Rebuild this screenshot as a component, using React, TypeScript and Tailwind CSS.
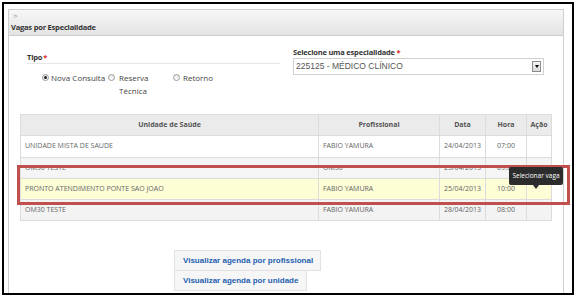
import React from 'react'

const rows = [
  { unidade: 'UNIDADE MISTA DE SAUDE', prof: 'FABIO YAMURA', data: '24/04/2013', hora: '07:00', bg: 'bg-white' },
  { unidade: 'OM30 TESTE', prof: 'OM30', data: '25/04/2013', hora: '09:00', bg: 'bg-[#f5f5f5]' },
  { unidade: 'PRONTO ATENDIMENTO PONTE SAO JOAO', prof: 'FABIO YAMURA', data: '25/04/2013', hora: '10:00', bg: 'bg-[#fdfdd6]' },
  { unidade: 'OM30 TESTE', prof: 'FABIO YAMURA', data: '28/04/2013', hora: '08:00', bg: 'bg-[#f3f3f3]' },
]

function Radio({ checked }: { checked?: boolean }) {
  return (
    <span className="mt-[3px] inline-flex h-[7px] w-[7px] shrink-0 items-center justify-center rounded-full border border-[#9a9a9a] bg-gradient-to-b from-[#e8e8e8] to-white">
      {checked && <span className="h-[3px] w-[3px] rounded-full bg-[#222]" />}
    </span>
  )
}

export default function App() {
  return (
    <div className="h-[297px] w-[579px] bg-white pl-[2px] pt-[2px] font-['Open_Sans',sans-serif]">
      <div className="relative h-[293px] w-[572px] overflow-hidden border-2 border-black bg-white">
        {/* panel */}
        <div className="ml-[4px] mt-[5px] h-[300px] w-[556px] border border-[#cfcfcf]">
          <div className="h-[26px] border-b border-[#cccccc] bg-gradient-to-b from-[#f7f7f7] to-[#e3e3e3] pl-[2px]">
            <div className="h-[11px] pl-[2px] pt-[1px] font-['DejaVu_Sans',sans-serif] text-[6px] leading-[9px] text-[#888]">&gt;</div>
            <div className="text-[7.5px] font-bold leading-[12px] tracking-[-0.2px] text-[#333]">Vagas por Especialidade</div>
          </div>

          <div className="flex gap-[13px] pl-[18px] pt-[11px]">
            <div className="w-[253px]">
              <div className="mt-[5px] h-[12px] border-b border-[#e6e6e6] text-[7.5px] font-bold leading-[10px] tracking-[-0.2px] text-[#333]">
                Tipo<span className="ml-[1px] text-[#d9261c]">*</span>
              </div>
              <div className="mt-[7px] flex pl-[15px] text-[8px] leading-[13px] text-[#444]">
                <div className="flex w-[66px] gap-[2px]">
                  <Radio checked />
                  <span>Nova Consulta</span>
                </div>
                <div className="flex w-[65px] gap-[2px]">
                  <Radio />
                  <span className="w-[40px] pl-[2px]">Reserva Técnica</span>
                </div>
                <div className="flex gap-[2px]">
                  <Radio />
                  <span className="pl-[1px]">Retorno</span>
                </div>
              </div>
            </div>
            <div className="w-[251px]">
              <div className="h-[10px] text-[7.5px] font-bold leading-[10px] tracking-[-0.2px] text-[#333]">
                Selecione uma especialidade <span className="text-[#d9261c]">*</span>
              </div>
              <div className="mt-[1px] flex h-[17px] items-center justify-between border border-[#d0d0d0] bg-white pl-[2px] pr-[2px] font-['Liberation_Sans',sans-serif] text-[8.5px] text-[#555]">
                <span>225125 - MÉDICO CLÍNICO</span>
                <span className="flex h-[11px] w-[9px] items-center justify-center border border-[#8d8d8d] bg-gradient-to-b from-[#f4f4f4] to-[#d8d8d8]">
                  <span className="h-0 w-0 border-x-[2px] border-t-[3px] border-x-transparent border-t-black" />
                </span>
              </div>
            </div>
          </div>

          <table className="ml-[11px] mt-[17px] w-[531px] table-fixed border-collapse text-[7px] text-[#666]">
            <colgroup>
              <col className="w-[298px]" />
              <col className="w-[121px]" />
              <col className="w-[46px]" />
              <col className="w-[41px]" />
              <col className="w-[25px]" />
            </colgroup>
            <thead>
              <tr className="h-[21px] bg-[#ebebeb] text-[7px] font-bold text-[#555]">
                <th className="border border-[#dcdcdc] font-bold">Unidade de Saúde</th>
                <th className="border border-[#dcdcdc] font-bold">Profissional</th>
                <th className="border border-[#dcdcdc] font-bold">Data</th>
                <th className="border border-[#dcdcdc] font-bold">Hora</th>
                <th className="border border-[#dcdcdc] font-bold">Ação</th>
              </tr>
            </thead>
            <tbody>
              {rows.map((r, i) => (
                <tr key={i} className={`${i === 0 ? 'h-[22px]' : 'h-[21px]'} ${r.bg}`}>
                  <td className="border border-[#dcdcdc] pl-[4px]">{r.unidade}</td>
                  <td className="border border-[#dcdcdc] pl-[4px]">{r.prof}</td>
                  <td className="border border-[#dcdcdc] text-center">{r.data}</td>
                  <td className="border border-[#dcdcdc] text-center">{r.hora}</td>
                  <td className="border border-[#dcdcdc]" />
                </tr>
              ))}
            </tbody>
          </table>

          <div className="ml-[165px] mt-[29px] font-['Liberation_Sans',sans-serif] text-[8px] font-bold text-[#1f5fb0]">
            <div className="flex h-[21px] w-[147px] items-center border border-[#e2e2e2] bg-[#f6f6f6] pl-[8px]">
              Visualizar agenda por profissional
            </div>
            <div className="-mt-px flex h-[21px] w-[133px] items-center border border-[#e2e2e2] bg-[#f6f6f6] pl-[8px]">
              Visualizar agenda por unidade
            </div>
          </div>
        </div>

        {/* highlight box */}
        <div className="absolute left-[13px] top-[161px] h-[40px] w-[553px] border-[3px] border-[#c0504d]" />

        {/* tooltip */}
        <div className="absolute left-[505px] top-[163px] flex flex-col items-center">
          <div className="flex h-[18px] w-[54px] items-center justify-center rounded-[2px] bg-[#2c2c2c] text-[6.5px] text-white">
            Selecionar vaga
          </div>
          <span className="h-0 w-0 border-x-[3px] border-t-[4px] border-x-transparent border-t-[#2c2c2c]" />
        </div>
      </div>
    </div>
  )
}
